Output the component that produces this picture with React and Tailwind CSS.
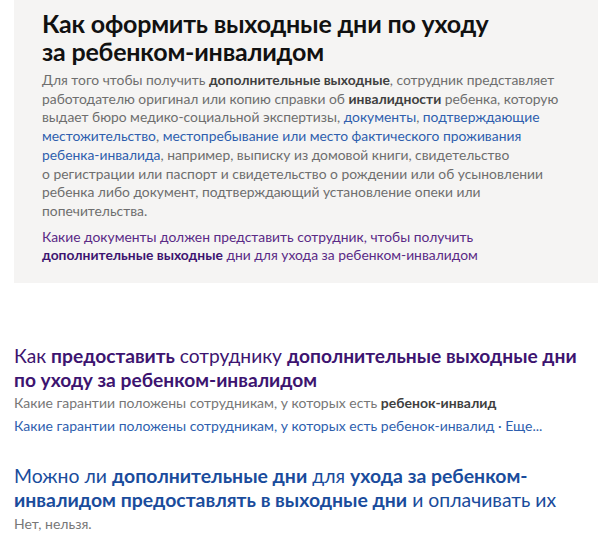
import React from "react";

const font = { fontFamily: "Lato, 'Open Sans', sans-serif" };

const Link = ({ children }) => <span className="text-[#2f5fae]">{children}</span>;
const B = ({ children }) => <b className="font-bold text-[#3f3f3f]">{children}</b>;

export default function App() {
  return (
    <div className="w-[598px] h-[544px] bg-white overflow-hidden" style={font}>
      <div className="ml-[14px] bg-[#f5f4f3] pl-[28px] pr-[20px] pt-[9px] pb-[18px]">
        <h1 className="text-[25px] leading-[28px] font-bold text-[#111] tracking-[-0.2px]">
          Как оформить выходные дни по уходу
          <br />
          за ребенком-инвалидом
        </h1>
        <p className="mt-[6px] text-[13.85px] leading-[18.7px] text-[#6e6e6e]">
          Для того чтобы получить <B>дополнительные выходные</B>, сотрудник представляет
          <br />
          работодателю оригинал или копию справки об <B>инвалидности</B> ребенка, которую
          <br />
          выдает бюро медико-социальной экспертизы, <Link>документы</Link>, <Link>подтверждающие</Link>
          <br />
          <Link>местожительство</Link>, <Link>местопребывание или место фактического проживания</Link>
          <br />
          <Link>ребенка-инвалида</Link>, например, выписку из домовой книги, свидетельство
          <br />
          о регистрации или паспорт и свидетельство о рождении или об усыновлении
          <br />
          ребенка либо документ, подтверждающий установление опеки или
          <br />
          попечительства.
        </p>
        <p className="mt-[7px] text-[13.85px] leading-[18.7px] text-[#5a2a86]">
          Какие документы должен представить сотрудник, чтобы получить
          <br />
          <b className="font-bold text-[#3d1470]">дополнительные выходные</b> дни для ухода за ребенком-инвалидом
        </p>
      </div>

      <div className="ml-[14px] mt-[61px]">
        <div className="text-[19.2px] leading-[24px] text-[#3d1470] whitespace-nowrap">
          Как <b className="font-bold">предоставить</b> сотруднику{" "}
          <b className="font-bold">дополнительные выходные дни</b>
          <br />
          <b className="font-bold">по уходу за ребенком-инвалидом</b>
        </div>
        <div className="mt-[1px] text-[14px] leading-[20px] text-[#777]">
          Какие гарантии положены сотрудникам, у которых есть <B>ребенок-инвалид</B>
        </div>
        <div className="mt-[3px] text-[14px] leading-[20px] text-[#2f5fae]">
          Какие гарантии положены сотрудникам, у которых есть ребенок-инвалид · Еще...
        </div>
      </div>

      <div className="ml-[14px] mt-[28px]">
        <div className="text-[19.4px] leading-[24px] text-[#1a4c9c] whitespace-nowrap">
          Можно ли <b className="font-bold">дополнительные дни</b> для{" "}
          <b className="font-bold">ухода за ребенком-</b>
          <br />
          <b className="font-bold">инвалидом предоставлять в выходные дни</b> и оплачивать их
        </div>
        <div className="mt-[2px] text-[14px] leading-[20px] text-[#777]">Нет, нельзя.</div>
      </div>
    </div>
  );
}
